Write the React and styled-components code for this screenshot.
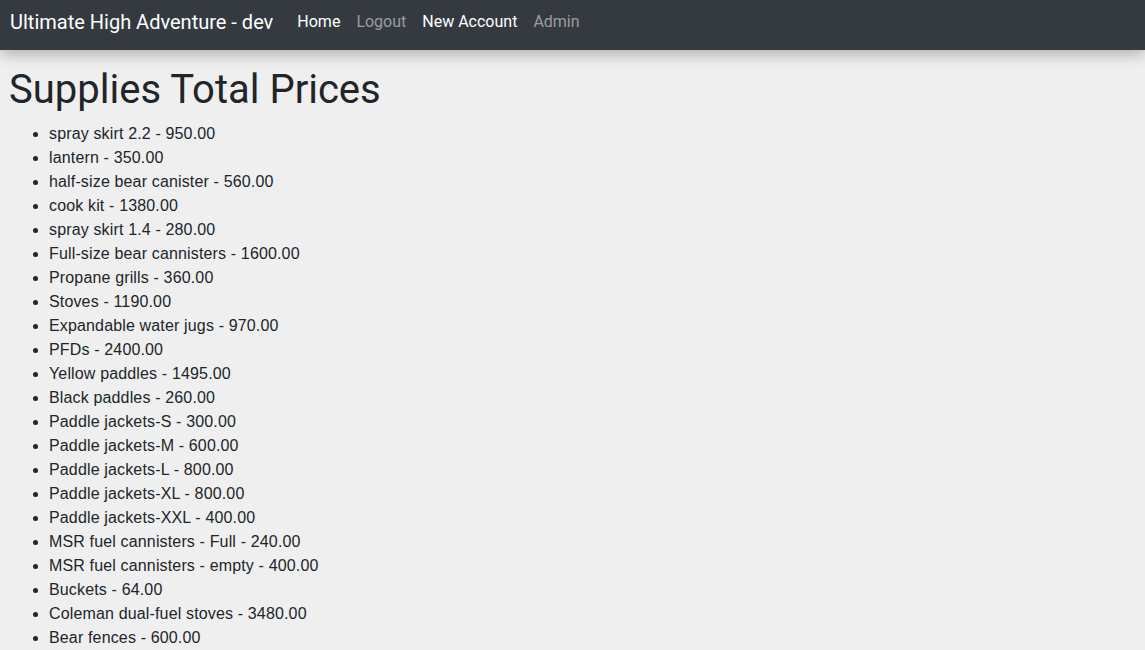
import React from 'react'
import styled, { createGlobalStyle } from 'styled-components'

const GlobalStyle = createGlobalStyle`
  html, body {
    margin: 0;
    padding: 0;
    background: #efefef;
  }
  body {
    font-family: "Liberation Sans", Arial, sans-serif;
    color: #212529;
  }
`

const supplies = [
  ['spray skirt 2.2', '950.00'],
  ['lantern', '350.00'],
  ['half-size bear canister', '560.00'],
  ['cook kit', '1380.00'],
  ['spray skirt 1.4', '280.00'],
  ['Full-size bear cannisters', '1600.00'],
  ['Propane grills', '360.00'],
  ['Stoves', '1190.00'],
  ['Expandable water jugs', '970.00'],
  ['PFDs', '2400.00'],
  ['Yellow paddles', '1495.00'],
  ['Black paddles', '260.00'],
  ['Paddle jackets-S', '300.00'],
  ['Paddle jackets-M', '600.00'],
  ['Paddle jackets-L', '800.00'],
  ['Paddle jackets-XL', '800.00'],
  ['Paddle jackets-XXL', '400.00'],
  ['MSR fuel cannisters - Full', '240.00'],
  ['MSR fuel cannisters - empty', '400.00'],
  ['Buckets', '64.00'],
  ['Coleman dual-fuel stoves', '3480.00'],
  ['Bear fences', '600.00'],
]

const links = [
  { label: 'Home', active: true },
  { label: 'Logout' },
  { label: 'New Account', active: true },
  { label: 'Admin' },
]

export default function App() {
  return (
    <>
      <GlobalStyle />
      <NavWrapper>
        <Brand href="#">Ultimate High Adventure - dev</Brand>
        <NavList>
          {links.map(l => (
            <li key={l.label}>
              <NavLink href="#" $active={l.active}>{l.label}</NavLink>
            </li>
          ))}
        </NavList>
      </NavWrapper>
      <Main>
        <Title>Supplies Total Prices</Title>
        <SupplyList>
          {supplies.map(([name, price]) => (
            <li key={name}>{name} - {price}</li>
          ))}
        </SupplyList>
      </Main>
    </>
  )
}

const NavWrapper = styled.nav`
  display: flex;
  align-items: center;
  height: 50px;
  padding: 0 10px;
  background: #343a40;
  box-shadow: 0 4px 14px rgba(0, 0, 0, 0.28);
  position: relative;
  font-family: Roboto, "Liberation Sans", sans-serif;
`

const Brand = styled.a`
  color: #fff;
  font-size: 20px;
  text-decoration: none;
  margin-right: 24px;
  padding-bottom: 7px;
`

const NavList = styled.ul`
  display: flex;
  list-style: none;
  margin: 0;
  padding: 0;
  gap: 16px;
  padding-bottom: 7px;
`

const NavLink = styled.a`
  color: ${p => (p.$active ? '#fff' : 'rgba(255,255,255,0.5)')};
  font-size: 16px;
  text-decoration: none;
`

const Main = styled.main`
  padding: 0 9px;
`

const Title = styled.h1`
  font-family: Roboto, "Liberation Sans", sans-serif;
  font-weight: 400;
  font-size: 40px;
  line-height: 1.2;
  margin: 16px 0 8px;
`

const SupplyList = styled.ul`
  margin: 0;
  padding-left: 40px;
  font-size: 16px;
  line-height: 24px;
  letter-spacing: 0.15px;
`
